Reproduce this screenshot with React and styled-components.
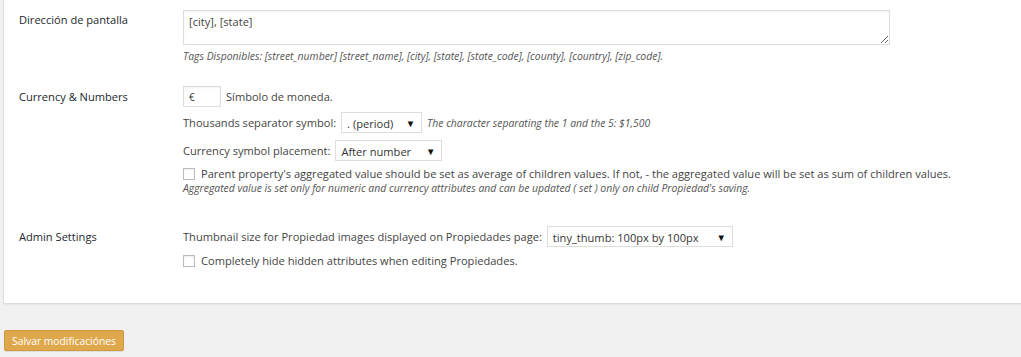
import React from "react";
import styled, { createGlobalStyle } from "styled-components";

const GlobalStyle = createGlobalStyle`
  html, body {
    margin: 0;
    padding: 0;
    background: #f1f1f1;
    font-family: "Open Sans", "Liberation Sans", sans-serif;
    color: #444;
  }
`;

function App() {
  return (
    <Page>
      <GlobalStyle />
      <Panel>
        <Row>
          <Label>Dirección de pantalla</Label>
          <Field>
            <TextArea defaultValue="[city], [state]" />
            <Note $top={5}>
              Tags Disponibles: [street_number] [street_name], [city], [state],
              [state_code], [county], [country], [zip_code].
            </Note>
          </Field>
        </Row>

        <Row $top={24}>
          <Label $top={4}>Currency &amp; Numbers</Label>
          <Field>
            <Line>
              <SmallInput>€</SmallInput>
              <span>Símbolo de moneda.</span>
            </Line>
            <Line $top={5}>
              <span>Thousands separator symbol:</span>
              <Select $width={81}>
                . (period) <Arrow>▼</Arrow>
              </Select>
              <Note>The character separating the 1 and the 5: $1,500</Note>
            </Line>
            <Line $top={7}>
              <span>Currency symbol placement:</span>
              <Select $width={107}>
                After number <Arrow>▼</Arrow>
              </Select>
            </Line>
            <Line $top={6}>
              <Check />
              <span>
                Parent property's aggregated value should be set as average of
                children values. If not, - the aggregated value will be set as
                sum of children values.
              </span>
            </Line>
            <Note $top={1}>
              Aggregated value is set only for numeric and currency attributes
              and can be updated ( set ) only on child Propiedad's saving.
            </Note>
          </Field>
        </Row>

        <Row $top={32}>
          <Label $top={4}>Admin Settings</Label>
          <Field>
            <Line>
              <span>Thumbnail size for Propiedad images displayed on Propiedades page:</span>
              <Select $width={186}>
                tiny_thumb: 100px by 100px <Arrow>▼</Arrow>
              </Select>
            </Line>
            <Line $top={7}>
              <Check />
              <span>Completely hide hidden attributes when editing Propiedades.</span>
            </Line>
          </Field>
        </Row>
      </Panel>
      <Button>Salvar modificaciónes</Button>
    </Page>
  );
}

const Page = styled.div`
  width: 1021px;
  height: 357px;
  overflow: hidden;
  background: #f1f1f1;
`;

const Panel = styled.div`
  margin-left: 3px;
  width: 1030px;
  height: 304px;
  box-sizing: border-box;
  background: #fff;
  border: 1px solid #dcdcdc;
  border-top: none;
  border-right: none;
  padding: 10px 0 0 15px;
  box-shadow: 0 1px 1px rgba(0, 0, 0, 0.04);
`;

const Row = styled.div`
  display: grid;
  grid-template-columns: 164px 1fr;
  margin-top: ${(p) => p.$top || 0}px;
`;

const Label = styled.div`
  font-size: 11.1px;
  color: #23282d;
  padding-top: ${(p) => (p.$top === undefined ? 3 : p.$top)}px;
  line-height: 14px;
`;

const Field = styled.div`
  display: flex;
  flex-direction: column;
  align-items: flex-start;
  font-size: 11.1px;
  color: #444;
`;

const TextArea = styled.textarea`
  width: 707px;
  height: 35px;
  box-sizing: border-box;
  border: 1px solid #ddd;
  font-family: "Open Sans", "Liberation Sans", sans-serif;
  font-size: 11.1px;
  color: #444;
  padding: 3px 5px;
  margin: 0;
  resize: both;
  outline: none;
  box-shadow: inset 0 1px 2px rgba(0, 0, 0, 0.05);
`;

const Note = styled.div`
  font-size: 10.4px;
  font-style: italic;
  color: #555;
  margin-top: ${(p) => p.$top || 0}px;
  line-height: 12px;
`;

const Line = styled.div`
  display: flex;
  align-items: center;
  gap: 5px;
  margin-top: ${(p) => p.$top || 0}px;
  line-height: 14px;
  white-space: nowrap;
`;

const SmallInput = styled.div`
  width: 38px;
  height: 21px;
  box-sizing: border-box;
  border: 1px solid #ddd;
  padding: 3px 5px;
  font-size: 10px;
  color: #333;
  box-shadow: inset 0 1px 2px rgba(0, 0, 0, 0.05);
`;

const Select = styled.div`
  width: ${(p) => p.$width}px;
  height: 21px;
  box-sizing: border-box;
  border: 1px solid #ddd;
  display: flex;
  align-items: center;
  justify-content: space-between;
  padding: 2px 6px 0 5px;
  color: #333;
  background: #fff;
  font-size: 11.1px;
`;

const Arrow = styled.span`
  font-size: 9.5px;
  color: #111;
`;

const Check = styled.span`
  width: 12px;
  height: 12px;
  box-sizing: border-box;
  border: 1px solid #bbb;
  background: #fff;
  margin-right: 1px;
  box-shadow: inset 0 1px 2px rgba(0, 0, 0, 0.08);
`;

const Button = styled.button`
  display: block;
  margin: 26px 0 0 4px;
  width: 120px;
  height: 21px;
  background: #e0a84c;
  border: 1px solid #d29a3d;
  border-radius: 2px;
  color: #fff;
  font-family: "Open Sans", "Liberation Sans", sans-serif;
  font-size: 10.3px;
  padding: 0;
  box-shadow: 0 1px 0 rgba(0, 0, 0, 0.08);
`;

export default App;
